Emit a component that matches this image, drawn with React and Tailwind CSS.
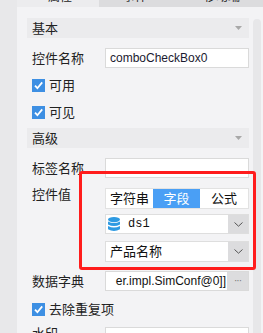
import React from "react";

const font = "font-['Liberation_Sans','Noto_Sans_CJK_SC',sans-serif]";

function Check() {
  return (
    <svg width="13" height="13" viewBox="0 0 13 13" className="shrink-0">
      <rect width="13" height="13" fill="#3d8fe3" />
      <path d="M3 6.6 L5.4 9.2 L10.2 3.4" stroke="#fff" strokeWidth="1.8" fill="none" />
    </svg>
  );
}

function Chevron() {
  return (
    <svg width="9" height="5" viewBox="0 0 9 5">
      <path d="M0.5 0.5 L4.5 4.2 L8.5 0.5" stroke="#555" strokeWidth="1" fill="none" />
    </svg>
  );
}

function Header({ title }) {
  return (
    <div className="h-[20px] bg-[#ebebed] flex items-center justify-between pl-[5px] pr-[7px]">
      <span className="text-[13px] leading-none text-[#222]">{title}</span>
      <svg width="7" height="4" viewBox="0 0 7 4">
        <path d="M0 0 H7 L3.5 4 Z" fill="#a8a8a8" />
      </svg>
    </div>
  );
}

function Row({ label, children, className = "", top = false }) {
  return (
    <div className={`flex pl-[5px] ${top ? "items-start" : "items-center"} ${className}`}>
      <span className={`w-[73px] shrink-0 text-[13px] text-[#222] ${top ? "leading-[14px]" : "leading-none"}`}>{label}</span>
      <div className="flex-1 min-w-0">{children}</div>
    </div>
  );
}

function CheckRow({ label, className = "" }) {
  return (
    <div className={`flex items-center gap-[4px] pl-[5px] h-[13px] ${className}`}>
      <Check />
      <span className="text-[13px] leading-none text-[#222]">{label}</span>
    </div>
  );
}

function DbIcon() {
  return (
    <svg width="12" height="15" viewBox="0 0 12 15" className="shrink-0">
      <ellipse cx="6" cy="2.6" rx="6" ry="2.6" fill="#2e9ae2" />
      <path d="M0 4.4 Q6 7.6 12 4.4 V7.4 Q6 10.6 0 7.4 Z" fill="#2e9ae2" />
      <path d="M0 9 Q6 12.2 12 9 V12.2 Q6 15.6 0 12.2 Z" fill="#2e9ae2" />
    </svg>
  );
}

function Select({ children, className = "" }) {
  return (
    <div className={`flex bg-white border border-[#dedede] ${className}`}>
      <div className="flex-1 flex items-center pl-[2px] min-w-0">{children}</div>
      <div className="w-[20px] bg-[#dcdcde] flex items-center justify-center">
        <Chevron />
      </div>
    </div>
  );
}

export default function App() {
  return (
    <div className={`relative w-[263px] h-[333px] overflow-hidden flex bg-[#f3f3f5] ${font}`}>
      <div className="w-[17px] shrink-0 bg-[#e8e8ea]" />
      <div className="flex-1 flex flex-col">
        {/* tabs, cut off at top */}
        <div className="h-[7px] flex overflow-hidden shrink-0">
          <div className="w-[82px] bg-[#ececee] flex items-end justify-center pr-[-4px]">
            <span className="text-[12px] leading-none mb-[4px] text-[#222] ml-[4px]">属性</span>
          </div>
          <div className="w-[82px] bg-[#dcdcde] flex items-end justify-center">
            <span className="text-[12px] leading-none mb-[4px] text-[#222] mr-[10px]">事件</span>
          </div>
          <div className="flex-1 bg-[#dcdcde] flex items-end justify-center">
            <span className="text-[12px] leading-none mb-[4px] text-[#222]">移动端</span>
          </div>
        </div>

        <div className="flex flex-1">
          <div className="w-[236px] shrink-0 pl-[10px] pr-[4px] flex flex-col">
            <div className="mt-[11px]">
              <Header title="基本" />
            </div>

            <Row label="控件名称" className="mt-[10px]">
              <div className="h-[20px] bg-white border border-[#dadada] flex items-center pl-[4px] text-[12px] text-[#1a1a30]">
                comboCheckBox0
              </div>
            </Row>

            <CheckRow label="可用" className="mt-[11px]" />
            <CheckRow label="可见" className="mt-[14px]" />

            <div className="mt-[9px]">
              <Header title="高级" />
            </div>

            <Row label="标签名称" className="mt-[10px]">
              <div className="h-[20px] bg-white border border-[#dadada]" />
            </Row>

            <Row label="控件值" className="mt-[10px]" top>
              <div className="h-[21px] flex border border-[#e2e2e2] bg-white text-[13px] leading-none">
                <div className="w-[47px] flex items-center justify-center text-[#111]">字符串</div>
                <div className="w-[47px] flex items-center justify-center bg-[#4a9ff5] text-white">字段</div>
                <div className="flex-1 flex items-center justify-center text-[#111]">公式</div>
              </div>
              <Select className="h-[20px] mt-[5px]">
                <DbIcon />
                <span className="ml-[8px] font-['Liberation_Mono',monospace] text-[12px] leading-none text-[#111]">ds1</span>
              </Select>
              <Select className="h-[21px] mt-[7px]">
                <span className="ml-[2px] text-[13px] leading-none text-[#111]">产品名称</span>
              </Select>
            </Row>

            <Row label="数据字典" className="mt-[9px]">
              <div className="h-[20px] flex bg-white border border-[#dadada]">
                <div className="flex-1 overflow-hidden flex items-center justify-end whitespace-nowrap text-[12px] text-[#111] pr-[1px]">
                  er.impl.SimConf@0]]
                </div>
                <div className="w-[21px] bg-[#dcdcde] flex items-center justify-center text-[10px] leading-none text-[#777] tracking-[-1px]">
                  ···
                </div>
              </div>
            </Row>

            <CheckRow label="去除重复项" className="mt-[12px]" />

            <Row label="水印" className="mt-[11px]" top>
              <div className="h-[20px] bg-white border border-[#dadada]" />
            </Row>
          </div>

          {/* scrollbar */}
          <div className="flex-1 flex flex-col pt-[12px] pr-[2px]">
            <div className="flex-1 w-[8px] rounded-t-[4px] bg-[#e7e7e9]" />
          </div>
        </div>
      </div>

      {/* red annotation box */}
      <div className="absolute left-[79px] top-[171px] w-[177px] h-[99px] border-[3px] border-[#ff1c1c] rounded-[3px]" />
    </div>
  );
}
